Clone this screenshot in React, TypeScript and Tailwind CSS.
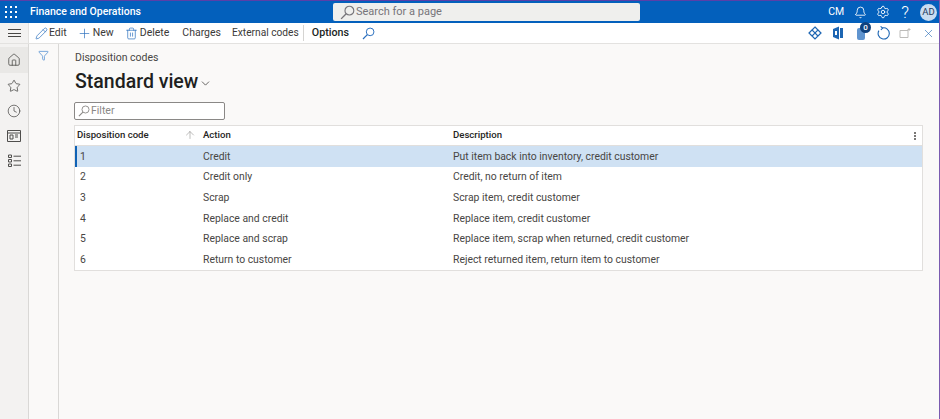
import React from 'react';
import { Bell, ChevronDown, Clock, Filter, Home, Pencil, Plus, Settings, Star, Trash2, X, ArrowUp } from 'lucide-react';

const rows = [
  ['1', 'Credit', 'Put item back into inventory, credit customer'],
  ['2', 'Credit only', 'Credit, no return of item'],
  ['3', 'Scrap', 'Scrap item, credit customer'],
  ['4', 'Replace and credit', 'Replace item, credit customer'],
  ['5', 'Replace and scrap', 'Replace item, scrap when returned, credit customer'],
  ['6', 'Return to customer', 'Reject returned item, return item to customer'],
];

const Waffle = () => (
  <svg width="13" height="13" viewBox="0 0 13 13" fill="white">
    {[1, 6, 11].map((y) => [1, 6, 11].map((x) => <rect key={`${x}-${y}`} x={x - 1} y={y - 1} width="2" height="2" />))}
  </svg>
);

// magnifier with the lens up and to the right
const Magnifier = ({ size, className }: { size: number; className?: string }) => (
  <svg width={size} height={size} viewBox="0 0 16 16" fill="none" stroke="currentColor" strokeWidth="1.2" className={className}>
    <circle cx="10" cy="6" r="4.7" />
    <path d="M6.6 9.4L1.2 14.8" strokeWidth="1.5" />
  </svg>
);

const App = () => {
  return (
    <div className="w-[940px] h-[419px] overflow-hidden bg-[#faf9f8] border-r border-[#7a5bb0] flex flex-col font-['Roboto',sans-serif] text-[#484644]">
      {/* top bar */}
      <header className="h-[23px] shrink-0 bg-[#0360bc] border-t border-[#5a3fa8] flex items-center text-white">
        <div className="w-[30px] pl-[5px] flex items-center"><Waffle /></div>
        <span className="w-[303px] text-[10.5px] font-medium">Finance and Operations</span>
        <div className="w-[307px] h-[18px] bg-[#efefed] rounded-[2px] flex items-center pl-[7px] gap-[1px] text-[#77757a]">
          <Magnifier size={15} />
          <span className="text-[11px]">Search for a page</span>
        </div>
        <div className="ml-auto flex items-center pr-[2px]">
          <span className="text-[10.5px] mr-[10px]">CM</span>
          <Bell size={13} strokeWidth={1.6} className="mr-[9px]" />
          <Settings size={14} strokeWidth={1.5} className="mr-[11px]" />
          <span className="text-[17px] font-light leading-none mr-[11px]">?</span>
          <div className="w-[17px] h-[17px] rounded-full bg-[#c9dcf0] text-[#1c3a5c] text-[9.5px] flex items-center justify-center">AD</div>
        </div>
      </header>

      {/* command bar */}
      <nav className="h-[21px] shrink-0 bg-white border-b border-[#e3e2e0] flex items-center text-[10.5px] text-[#3b3a39]">
        <button className="w-[29px] h-full flex flex-col gap-[2.5px] items-center justify-center bg-[#f3f2f1] border-r border-[#e3e2e0]">
          <span className="w-[13px] h-px bg-[#484644]" />
          <span className="w-[13px] h-px bg-[#484644]" />
          <span className="w-[13px] h-px bg-[#484644]" />
        </button>
        <span className="ml-[6px] flex items-center gap-[1px]"><Pencil size={13} strokeWidth={1.3} className="text-[#2a6fbe]" />Edit</span>
        <span className="ml-[10px] flex items-center gap-[1px]"><Plus size={15} strokeWidth={1.1} className="text-[#2a6fbe]" />New</span>
        <span className="ml-[11px] flex items-center gap-[2px]"><Trash2 size={13} strokeWidth={1.3} className="text-[#2a6fbe]" />Delete</span>
        <span className="ml-[13px]">Charges</span>
        <span className="ml-[11px] pr-[4px] text-[10.2px] border-r border-[#d5d4d2]">External codes</span>
        <span className="ml-[8px] text-[10.7px] font-medium text-[#201f1e]">Options</span>
        <Magnifier size={13} className="ml-[13px] text-[#2a6fbe]" />
        <div className="ml-auto flex items-center text-[#1d66b3]">
          <svg width="14" height="14" viewBox="0 0 14 14" fill="none" stroke="currentColor" strokeWidth="1.2" className="mr-[10px]">
            <path d="M7 1l3 3-3 3-3-3zM7 7l3 3-3 3-3-3zM4 4L1 7l3 3M10 4l3 3-3 3" />
          </svg>
          <svg width="12" height="14" viewBox="0 0 12 14" className="mr-[13px]" fill="currentColor">
            <path d="M1 3l6-2.5V13.5L1 11zM8 2h3v10H8z" />
            <path d="M3 5h2v4H3z" fill="white" />
          </svg>
          <div className="relative mr-[6px] w-[14px] h-[14px]">
            <div className="absolute left-0 top-[2px] w-[8px] h-[12px] rounded-[2px] bg-[#5f94cf]" />
            <div className="absolute left-[3px] -top-[4px] w-[11px] h-[11px] rounded-full bg-[#10427e] text-white text-[8px] leading-[11px] text-center font-medium">0</div>
          </div>
          <svg width="14" height="14" viewBox="0 0 14 14" fill="none" stroke="currentColor" strokeWidth="1.1" className="mr-[8px]">
            <path d="M5.4 2A5.6 5.6 0 1 1 1.9 4.6" />
            <path d="M3.6.4L5.6 2 3.9 4" />
          </svg>
          <svg width="13" height="12" viewBox="0 0 13 12" fill="none" stroke="#bdbcba" className="mr-[10px]">
            <path d="M1 3.5h8v7H1zM10 1v3M8.5 2.5h3" />
          </svg>
          <X size={13} strokeWidth={1.1} className="mr-[4px]" />
        </div>
      </nav>

      <div className="flex flex-1 min-h-0">
        {/* nav rail */}
        <aside className="w-[29px] shrink-0 pt-[3px] bg-[#f3f2f1] border-r border-[#d9d8d6] flex flex-col items-center text-[#4f4e4c]">
          <div className="w-full h-[26px] bg-[#e9e8e6] flex items-center justify-center"><Home size={14} strokeWidth={1.4} /></div>
          <div className="h-[25px] flex items-center justify-center"><Star size={14} strokeWidth={1.4} /></div>
          <div className="h-[25px] flex items-center justify-center"><Clock size={14} strokeWidth={1.3} /></div>
          <div className="h-[25px] flex items-center justify-center">
            <svg width="14" height="12" viewBox="0 0 14 12" fill="none" stroke="currentColor">
              <path d="M.5.5h13v11H.5zM.5 3h13" />
              <path d="M3 5h3v4H3zM8 5h3M8 7h3" />
            </svg>
          </div>
          <div className="h-[25px] flex items-center justify-center">
            <svg width="13" height="13" viewBox="0 0 13 13" fill="none" stroke="currentColor">
              <path d="M.5 1h3v2.5h-3zM.5 5.5h3V8h-3zM.5 10h3v2.5h-3zM5.5 2.2H13M5.5 6.8H13M5.5 11.2H13" />
            </svg>
          </div>
        </aside>

        {/* filter pane */}
        <div className="w-[30px] shrink-0 border-r border-[#d9d8d6] flex justify-center pt-[6px]">
          <Filter size={11} strokeWidth={1.6} className="text-[#4a8ad0]" />
        </div>

        {/* content */}
        <main className="flex-1 min-w-0 pl-[15px] pr-[16px]">
          <p className="text-[10.5px] mt-[7px] ml-px leading-[14px]">Disposition codes</p>
          <div className="flex items-center ml-px mt-[5px] h-[24px]">
            <h1 className="text-[19.5px] font-medium text-[#201f1e] leading-none">Standard view</h1>
            <ChevronDown size={13} strokeWidth={1.4} className="ml-[1px] mt-[3px] text-[#3b3a39]" />
          </div>
          <div className="mt-[8px] w-[151px] h-[18px] bg-white border border-[#8a8886] rounded-[2px] flex items-center pl-[3px] gap-[1px] text-[#8a8886]">
            <Magnifier size={12} />
            <span className="text-[10.5px]">Filter</span>
          </div>

          <div className="mt-[5px] bg-white border border-[#e1dfdd]">
            <div className="h-[20px] flex items-center text-[9.6px] font-medium border-b border-[#e1dfdd] text-[#252423]">
              <div className="w-[128px] pl-[2px] flex items-center">
                <span>Disposition code</span>
                <ArrowUp size={12} strokeWidth={1.1} className="ml-auto mr-[7px] text-[#8a8886]" />
              </div>
              <div className="w-[250px]">Action</div>
              <div className="flex-1">Description</div>
              <div className="w-[14px] flex flex-col items-center gap-[1px]">
                <span className="w-[2px] h-[2px] bg-[#7a7876]" />
                <span className="w-[2px] h-[2px] bg-[#7a7876]" />
                <span className="w-[2px] h-[2px] bg-[#7a7876]" />
              </div>
            </div>
            {rows.map((row, index) => (
              <div
                key={row[0]}
                className={`h-[20.7px] flex items-center text-[10.4px] ${index === 0 ? 'bg-[#cfe1f3] border-l-2 border-[#0f62b5]' : 'border-l-2 border-transparent'}`}
              >
                <div className="w-[126px] pl-[3px]">{row[0]}</div>
                <div className="w-[250px]">{row[1]}</div>
                <div className="flex-1">{row[2]}</div>
              </div>
            ))}
          </div>
        </main>
      </div>
    </div>
  );
};

export default App;
